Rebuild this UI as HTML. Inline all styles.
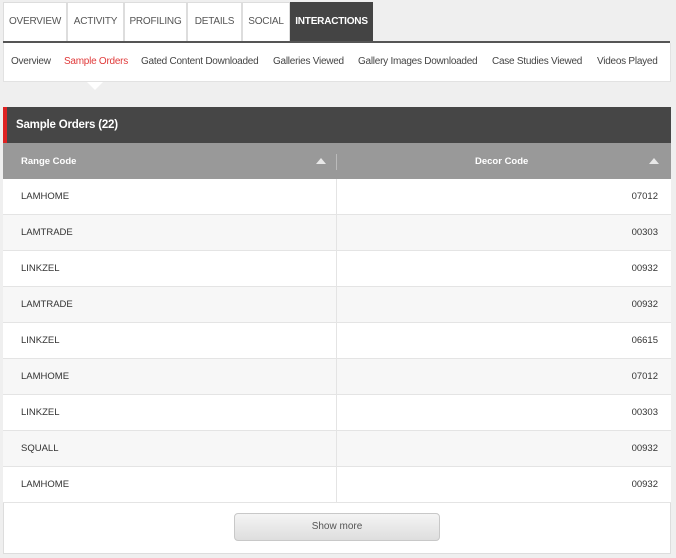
<!DOCTYPE html>
<html><head><style>
*{margin:0;padding:0;box-sizing:border-box}
body{width:676px;height:558px;background:#efefef;font-family:"Liberation Sans",Arial,sans-serif;position:relative;overflow:hidden;color:#333}
.tab{position:absolute;top:2px;height:40px;background:#fff;border:1px solid #ddd;border-bottom:none;font-size:10px;color:#555;line-height:38px;text-align:center;letter-spacing:-0.2px}
.tab.on{background:#444;color:#fff;font-weight:bold;border-color:#444}
.uline{position:absolute;left:3px;top:41px;width:667px;height:2px;background:#555}
.sub{position:absolute;left:3px;top:43px;width:668px;height:39px;background:#fff;border:1px solid #e2e2e2;border-top:none}
.sub span{position:absolute;top:13px;font-size:10px;color:#444;white-space:nowrap;letter-spacing:-0.25px}
.arrow{position:absolute;left:87px;top:82px;width:0;height:0;border-left:8px solid transparent;border-right:8px solid transparent;border-top:8px solid #fff}
.panel{position:absolute;left:3px;top:107px;width:668px;height:447px;background:#fff;border:1px solid #ddd;border-top:none}
.ph{position:absolute;left:3px;top:107px;width:668px;height:36px;background:#464646;color:#fff;font-weight:bold;font-size:11.5px;line-height:36px;padding-left:9px;border-left:4px solid #d22;letter-spacing:-0.2px}
.th{position:absolute;left:3px;top:143px;width:668px;height:36px;background:#999;color:#fff;font-size:9.5px;font-weight:bold}
.th span{position:absolute;top:13px}
.tri{position:absolute;top:15px;width:0;height:0;border-left:5px solid transparent;border-right:5px solid transparent;border-bottom:6px solid #e8e8e8}
.row{position:absolute;left:3px;width:668px;height:36px;border-bottom:1px solid #e4e4e4;font-size:9.5px;color:#333}
.row .a{position:absolute;left:18px;top:12px}
.row .b{position:absolute;right:13px;top:12px}
.row .d{position:absolute;left:333px;top:0;width:1px;height:36px;background:#e4e4e4}
.btn{position:absolute;left:234px;top:513px;width:206px;height:28px;border:1px solid #c8c8c8;border-radius:4px;background:linear-gradient(#f4f4f4,#dedede);font-size:10px;color:#555;text-align:center;line-height:26px}
</style></head><body>
<div class="tab" style="left:3px;width:64px">OVERVIEW</div>
<div class="tab" style="left:67px;width:57px">ACTIVITY</div>
<div class="tab" style="left:124px;width:63px">PROFILING</div>
<div class="tab" style="left:187px;width:55px">DETAILS</div>
<div class="tab" style="left:242px;width:48px">SOCIAL</div>
<div class="tab on" style="left:290px;width:83px">INTERACTIONS</div>
<div class="uline"></div>
<div class="sub">
<span style="left:7px">Overview</span>
<span style="left:60px;color:#e03a3a">Sample Orders</span>
<span style="left:137px">Gated Content Downloaded</span>
<span style="left:269px">Galleries Viewed</span>
<span style="left:354px">Gallery Images Downloaded</span>
<span style="left:488px">Case Studies Viewed</span>
<span style="left:593px">Videos Played</span>
</div>
<div class="arrow"></div>
<div class="panel"></div>
<div class="ph">Sample Orders (22)</div>
<div class="th"><span style="left:18px">Range Code</span><div class="tri" style="left:313px"></div><div style="position:absolute;left:333px;top:11px;width:1px;height:16px;background:#bbb"></div><span style="left:472px">Decor Code</span><div class="tri" style="left:646px"></div></div>
<div class="row" style="top:179px;background:#fff"><span class="a">LAMHOME</span><div class="d"></div><span class="b">07012</span></div>
<div class="row" style="top:215px;background:#f7f7f7"><span class="a">LAMTRADE</span><div class="d"></div><span class="b">00303</span></div>
<div class="row" style="top:251px;background:#fff"><span class="a">LINKZEL</span><div class="d"></div><span class="b">00932</span></div>
<div class="row" style="top:287px;background:#f7f7f7"><span class="a">LAMTRADE</span><div class="d"></div><span class="b">00932</span></div>
<div class="row" style="top:323px;background:#fff"><span class="a">LINKZEL</span><div class="d"></div><span class="b">06615</span></div>
<div class="row" style="top:359px;background:#f7f7f7"><span class="a">LAMHOME</span><div class="d"></div><span class="b">07012</span></div>
<div class="row" style="top:395px;background:#fff"><span class="a">LINKZEL</span><div class="d"></div><span class="b">00303</span></div>
<div class="row" style="top:431px;background:#f7f7f7"><span class="a">SQUALL</span><div class="d"></div><span class="b">00932</span></div>
<div class="row" style="top:467px;background:#fff"><span class="a">LAMHOME</span><div class="d"></div><span class="b">00932</span></div>
<div class="btn">Show more</div>
</body></html>
